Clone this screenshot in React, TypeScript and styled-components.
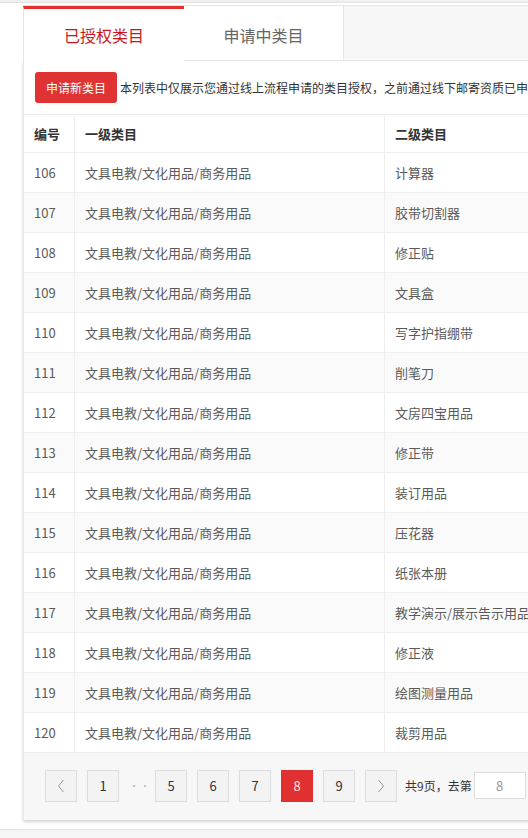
import * as React from 'react';
import styled, { createGlobalStyle } from 'styled-components';

const GlobalStyle = createGlobalStyle`
  body {
    margin: 0;
    background: #fff;
    font-family: "Noto Sans CJK SC", "Liberation Sans", sans-serif;
    overflow-x: hidden;
  }
`;

const TopStrip = styled.div`
  height: 2px;
  background: #f0f0f0;
  border-bottom: 1px solid #e3e3e3;
`;

const Page = styled.div`
  padding: 2px 0 0 23px;
  width: 720px;
`;

const TabBar = styled.div`
  display: flex;
  height: 56px;
  box-sizing: border-box;
  border-top: 1px solid #e6e6e6;
  background: #f7f7f7;
`;

const Tab = styled.div<{ $active?: boolean }>`
  box-sizing: border-box;
  display: flex;
  align-items: center;
  justify-content: center;
  background: #fff;
  font-size: 16px;
  color: ${p => (p.$active ? '#c8161d' : '#666')};
  border-top: ${p => (p.$active ? '3px solid #e0302f' : 'none')};
  border-left: ${p => (p.$active ? '1px solid #e6e6e6' : 'none')};
  border-right: ${p => (p.$active ? 'none' : '1px solid #e6e6e6')};
  border-bottom: ${p => (p.$active ? 'none' : '1px solid #e6e6e6')};
  width: ${p => (p.$active ? '161px' : '160px')};
  padding-top: ${p => (p.$active ? '0' : '3px')};
`;

const TabFill = styled.div`
  flex: 1;
  border-bottom: 1px solid #e6e6e6;
`;

const Panel = styled.div`
  background: #fff;
  border-left: 1px solid #e6e6e6;
  box-shadow: 0 2px 3px rgba(0, 0, 0, 0.18);
`;

const Toolbar = styled.div`
  display: flex;
  align-items: center;
  gap: 3px;
  padding: 11px 11px;
  border-bottom: 1px solid #eee;
`;

const RedButton = styled.button`
  height: 31px;
  padding: 0 11px;
  border: none;
  border-radius: 3px;
  background: #e03232;
  color: #fff;
  font-family: inherit;
  font-size: 12px;
  cursor: pointer;
`;

const Note = styled.span`
  font-size: 12px;
  color: #333;
  white-space: nowrap;
`;

const Row = styled.div<{ $head?: boolean; $stripe?: boolean }>`
  display: grid;
  grid-template-columns: 51px 310px 1fr;
  height: ${p => (p.$head ? '38px' : '40px')};
  box-sizing: border-box;
  border-bottom: 1px solid #eee;
  background: ${p => (p.$stripe ? '#fafafa' : '#fff')};
  font-size: 13px;
  color: ${p => (p.$head ? '#333' : '#5a5a5a')};
  font-weight: ${p => (p.$head ? 600 : 400)};
`;

const Cell = styled.div`
  display: flex;
  align-items: center;
  padding-left: 10px;
  border-right: 1px solid #eee;
  white-space: nowrap;
  &:last-child {
    border-right: none;
  }
`;

const Pager = styled.div`
  display: flex;
  align-items: center;
  gap: 10px;
  height: 67px;
  padding: 0 0 2px 21px;
  box-sizing: border-box;
  background: #f7f7f7;
`;

const PageBtn = styled.div<{ $active?: boolean }>`
  width: 32px;
  height: 32px;
  box-sizing: border-box;
  display: flex;
  align-items: center;
  justify-content: center;
  border: 1px solid ${p => (p.$active ? '#e0302f' : '#dcdcdc')};
  background: ${p => (p.$active ? '#e0302f' : '#f3f3f3')};
  color: ${p => (p.$active ? '#fde0e0' : '#333')};
  font-size: 13px;
`;

const Dots = styled.span`
  width: 16px;
  text-align: center;
  color: #bbb;
  font-size: 10px;
  letter-spacing: 1px;
`;

const Jump = styled.div`
  display: flex;
  align-items: center;
  gap: 2px;
  font-size: 12px;
  color: #333;
  margin-left: -2px;
  white-space: nowrap;
`;

const JumpInput = styled.div`
  width: 52px;
  height: 27px;
  box-sizing: border-box;
  border: 1px solid #ddd;
  background: #fff;
  color: #999;
  font-size: 13px;
  display: flex;
  align-items: center;
  justify-content: center;
  margin-right: 1px;
`;

const Footer = styled.div`
  margin-top: 9px;
  height: 12px;
  border-top: 1px solid #e3e3e3;
  background: #f5f5f5;
`;

const Chevron = ({ dir }: { dir: 'left' | 'right' }) => (
  <svg width="8" height="14" viewBox="0 0 8 14">
    <polyline
      points={dir === 'left' ? '6.5,1 1.5,7 6.5,13' : '1.5,1 6.5,7 1.5,13'}
      fill="none"
      stroke="#999"
      strokeWidth="1"
    />
  </svg>
);

const seconds = [
  '计算器', '胶带切割器', '修正贴', '文具盒', '写字护指绷带', '削笔刀', '文房四宝用品',
  '修正带', '装订用品', '压花器', '纸张本册', '教学演示/展示告示用品', '修正液',
  '绘图测量用品', '裁剪用品',
];

export default function App() {
  return (
    <>
      <GlobalStyle />
      <TopStrip />
      <Page>
        <TabBar>
          <Tab $active>已授权类目</Tab>
          <Tab>申请中类目</Tab>
          <TabFill />
        </TabBar>
        <Panel>
          <Toolbar>
            <RedButton>申请新类目</RedButton>
            <Note>本列表中仅展示您通过线上流程申请的类目授权，之前通过线下邮寄资质已申请的类目请联系招商人员查询。</Note>
          </Toolbar>
          <Row $head>
            <Cell>编号</Cell>
            <Cell>一级类目</Cell>
            <Cell>二级类目</Cell>
          </Row>
          {seconds.map((name, i) => (
            <Row key={i} $stripe={i % 2 === 1}>
              <Cell>{106 + i}</Cell>
              <Cell>文具电教/文化用品/商务用品</Cell>
              <Cell>{name}</Cell>
            </Row>
          ))}
          <Pager>
            <PageBtn><Chevron dir="left" /></PageBtn>
            <PageBtn>1</PageBtn>
            <Dots>···</Dots>
            <PageBtn>5</PageBtn>
            <PageBtn>6</PageBtn>
            <PageBtn>7</PageBtn>
            <PageBtn $active>8</PageBtn>
            <PageBtn>9</PageBtn>
            <PageBtn><Chevron dir="right" /></PageBtn>
            <Jump>
              共9页，去第<JumpInput>8</JumpInput>页
            </Jump>
          </Pager>
        </Panel>
      </Page>
      <Footer />
    </>
  );
}
